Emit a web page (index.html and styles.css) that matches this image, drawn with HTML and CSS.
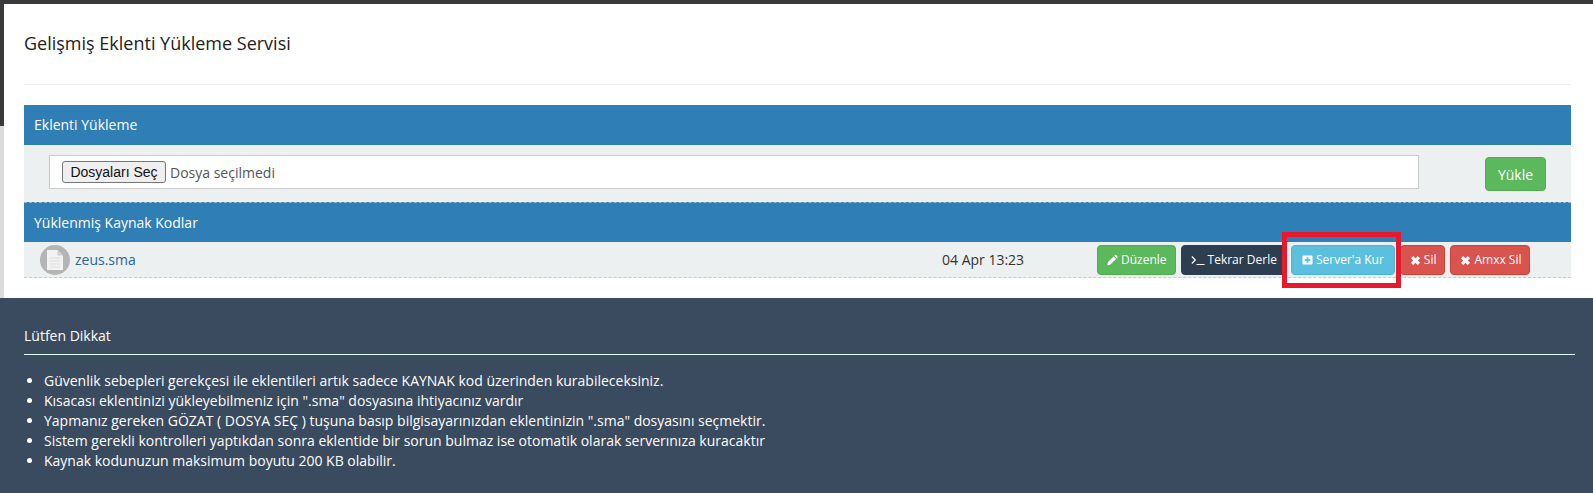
FILE: index.html
```html
<!DOCTYPE html>
<html lang="tr">
<head>
    <meta charset="UTF-8">
    <meta name="viewport" content="width=device-width, initial-scale=1.0">
    <title>Gelişmiş Eklenti Yükleme Servisi</title>
    <link rel="stylesheet" href="styles.css">
</head>
<body>

    <div class="top-line"></div>

    <div class="page">
        <div class="edge">
            <div class="edge-dark"></div>
        </div>

        <div class="content">
            <h1 class="page-title">Gelişmiş Eklenti Yükleme Servisi</h1>
            <hr class="title-line">

            <div class="bar">Eklenti Yükleme</div>
            <div class="upload-row">
                <div class="file-box">
                    <button class="file-btn" type="button">Dosyaları Seç</button>
                    <span class="file-name">Dosya seçilmedi</span>
                </div>
                <button class="btn btn-green btn-upload" type="button">Yükle</button>
            </div>

            <div class="bar bar-dashed">Yüklenmiş Kaynak Kodlar</div>
            <div class="file-row">
                <span class="file-icon">
                    <svg width="16" height="20" viewBox="0 0 16 20">
                        <path d="M0 0h10.500L16 5.500V20H0z" fill="#f2f2f2"/>
                        <path d="M10.500 0L16 5.500h-5.500z" fill="#cfcfcf"/>
                        <path d="M3 8h10M3 11h10M3 14h10M3 17h10" stroke="#dedede" stroke-width="1"/>
                    </svg>
                </span>
                <a class="file-link" href="#">zeus.sma</a>
                <span class="file-date">04 Apr 13:23</span>
                <div class="actions">
                    <button class="btn btn-green" type="button">
                        <svg class="ico" viewBox="0 0 12 12"><path d="M0.300 11.700l0.700-3.400 6.200-6.200 2.700 2.700-6.200 6.200zM8 1.300l0.700-0.700q0.700-0.600 1.400 0l1.300 1.300q0.600 0.700 0 1.400l-0.700 0.700z" fill="#fff"/></svg>
                        Düzenle
                    </button>
                    <button class="btn btn-dark" type="button">
                        <svg class="ico ico-term" viewBox="0 0 14 12"><path d="M0.800 2.500l3.500 3.500-3.500 3.500M5.500 10.500h8" fill="none" stroke="#fff" stroke-width="1.200"/></svg>
                        Tekrar Derle
                    </button>
                    <button class="btn btn-blue" type="button">
                        <svg class="ico" viewBox="0 0 12 12"><path fill-rule="evenodd" d="M2 1h8q1.500 0 1.500 1.500v7q0 1.500-1.500 1.500H2q-1.500 0-1.500-1.500v-7Q0.500 1 2 1zM5 3v2H3v2h2v2h2V7h2V5H7V3z" fill="#fff"/></svg>
                        Server'a Kur
                    </button>
                    <button class="btn btn-red" type="button">
                        <svg class="ico" viewBox="0 0 12 12"><path d="M3.500 1.500L6 4l2.500-2.500 2.500 2.500L8.500 6.500 11 9l-2.500 2.500L6 9l-2.500 2.500L1 9l2.500-2.500L1 4z" fill="#fff"/></svg>
                        Sil
                    </button>
                    <button class="btn btn-red" type="button">
                        <svg class="ico" viewBox="0 0 12 12"><path d="M3.500 1.500L6 4l2.500-2.500 2.500 2.500L8.500 6.500 11 9l-2.500 2.500L6 9l-2.500 2.500L1 9l2.500-2.500L1 4z" fill="#fff"/></svg>
                        Amxx Sil
                    </button>
                </div>
                <!-- kırmızı işaret -->
                <div class="marker"></div>
            </div>
        </div>
    </div>

    <div class="notice">
        <h3 class="notice-title">Lütfen Dikkat</h3>
        <ul class="notice-list">
            <li>Güvenlik sebepleri gerekçesi ile eklentileri artık sadece KAYNAK kod üzerinden kurabileceksiniz.</li>
            <li>Kısacası eklentinizi yükleyebilmeniz için ".sma" dosyasına ihtiyacınız vardır</li>
            <li>Yapmanız gereken GÖZAT ( DOSYA SEÇ ) tuşuna basıp bilgisayarınızdan eklentinizin ".sma" dosyasını seçmektir.</li>
            <li>Sistem gerekli kontrolleri yaptıkdan sonra eklentide bir sorun bulmaz ise otomatik olarak serverınıza kuracaktır</li>
            <li>Kaynak kodunuzun maksimum boyutu 200 KB olabilir.</li>
        </ul>
    </div>

</body>
</html>
```

FILE: styles.css
```css
body {
    font-family: "Open Sans", "Liberation Sans", sans-serif;
    font-size: 14px;
    margin: 0;
    padding: 0;
    background-color: #fff;
    color: #333;
}

.top-line {
    height: 4px;
    background-color: #3a3a3c;
}

.page {
    display: flex;
    height: 294px;
}

.edge {
    width: 4px;
    background-color: #dcdcdc;
}

.edge-dark {
    height: 122px;
    background-color: #3a3a3c;
}

.content {
    flex: 1;
    padding: 0 22px 0 20px;
}

.page-title {
    margin: 0;
    padding-top: 26px;
    height: 53px;
    box-sizing: border-box;
    font-size: 18px;
    line-height: 26px;
    font-weight: 400;
    color: #222;
}

.title-line {
    border: 0;
    border-top: 1px solid #eee;
    margin: 27px 0 20px;
}

.bar {
    height: 40px;
    line-height: 39px;
    padding-left: 10px;
    background-color: #2f7eb6;
    color: #fff;
    box-sizing: border-box;
}

.bar-dashed {
    border-top: 1px dashed #8fb6d2;
}

.upload-row {
    display: flex;
    align-items: flex-start;
    height: 57px;
    box-sizing: border-box;
    padding: 10px 25px 0 25px;
    background-color: #ecf0f1;
}

.file-box {
    width: 1370px;
    height: 34px;
    box-sizing: border-box;
    display: flex;
    align-items: center;
    padding-left: 12px;
    background-color: #fff;
    border: 1px solid #ccc;
}

.file-btn {
    width: 104px;
    height: 22px;
    padding: 0;
    font-family: "Liberation Sans", sans-serif;
    font-size: 14px;
    color: #111;
    background-color: #efefef;
    border: 1px solid #767676;
    border-radius: 3px;
}

.file-name {
    margin-left: 4px;
    color: #555;
}

.btn {
    display: flex;
    align-items: center;
    gap: 3px;
    height: 30px;
    padding: 0 8px 0 9px;
    font-family: inherit;
    font-size: 12px;
    color: #fff;
    border-radius: 4px;
    border: 1px solid transparent;
    white-space: nowrap;
}

.btn-green {
    background-color: #5cb85c;
    border-color: #4cae4c;
}

.btn-dark {
    background-color: #2c3e50;
    border-color: #2c3e50;
}

.btn-blue {
    background-color: #5bc0de;
    border-color: #46b8da;
    padding: 0 10px;
}

.btn-red {
    background-color: #d9534f;
    border-color: #d43f3a;
}

.btn-upload {
    justify-content: center;
    width: 61px;
    height: 34px;
    margin: 2px 0 0 66px;
    padding: 0;
    font-size: 14px;
}

.file-row {
    position: relative;
    display: flex;
    align-items: center;
    height: 36px;
    box-sizing: border-box;
    padding-left: 16px;
    background-color: #ecf0f1;
    border-bottom: 1px dashed #ccc;
}

.file-icon {
    display: flex;
    align-items: center;
    justify-content: center;
    width: 30px;
    height: 30px;
    border-radius: 50%;
    background-color: #b5b5b5;
}

.file-link {
    margin-left: 5px;
    width: 867px;
    color: #2a6496;
    text-decoration: none;
}

.file-date {
    width: 155px;
    color: #333;
}

.actions {
    display: flex;
    gap: 5px;
}

.ico {
    width: 11px;
    height: 12px;
    flex-shrink: 0;
}

.ico-term {
    width: 14px;
}

.marker {
    position: absolute;
    left: 1258px;
    top: -10px;
    width: 119px;
    height: 56px;
    box-sizing: border-box;
    border: 5px solid #e8192c;
}

.notice {
    height: 195px;
    box-sizing: border-box;
    padding: 28px 18px 0 24px;
    background-color: #3a4a5f;
    color: #fff;
}

.notice-title {
    margin: 0;
    padding-bottom: 8px;
    font-size: 14px;
    line-height: 20px;
    font-weight: 400;
    border-bottom: 1px solid #dff;
}

.notice-list {
    margin: 16px 0 0;
    padding-left: 20px;
    line-height: 20px;
}
```
